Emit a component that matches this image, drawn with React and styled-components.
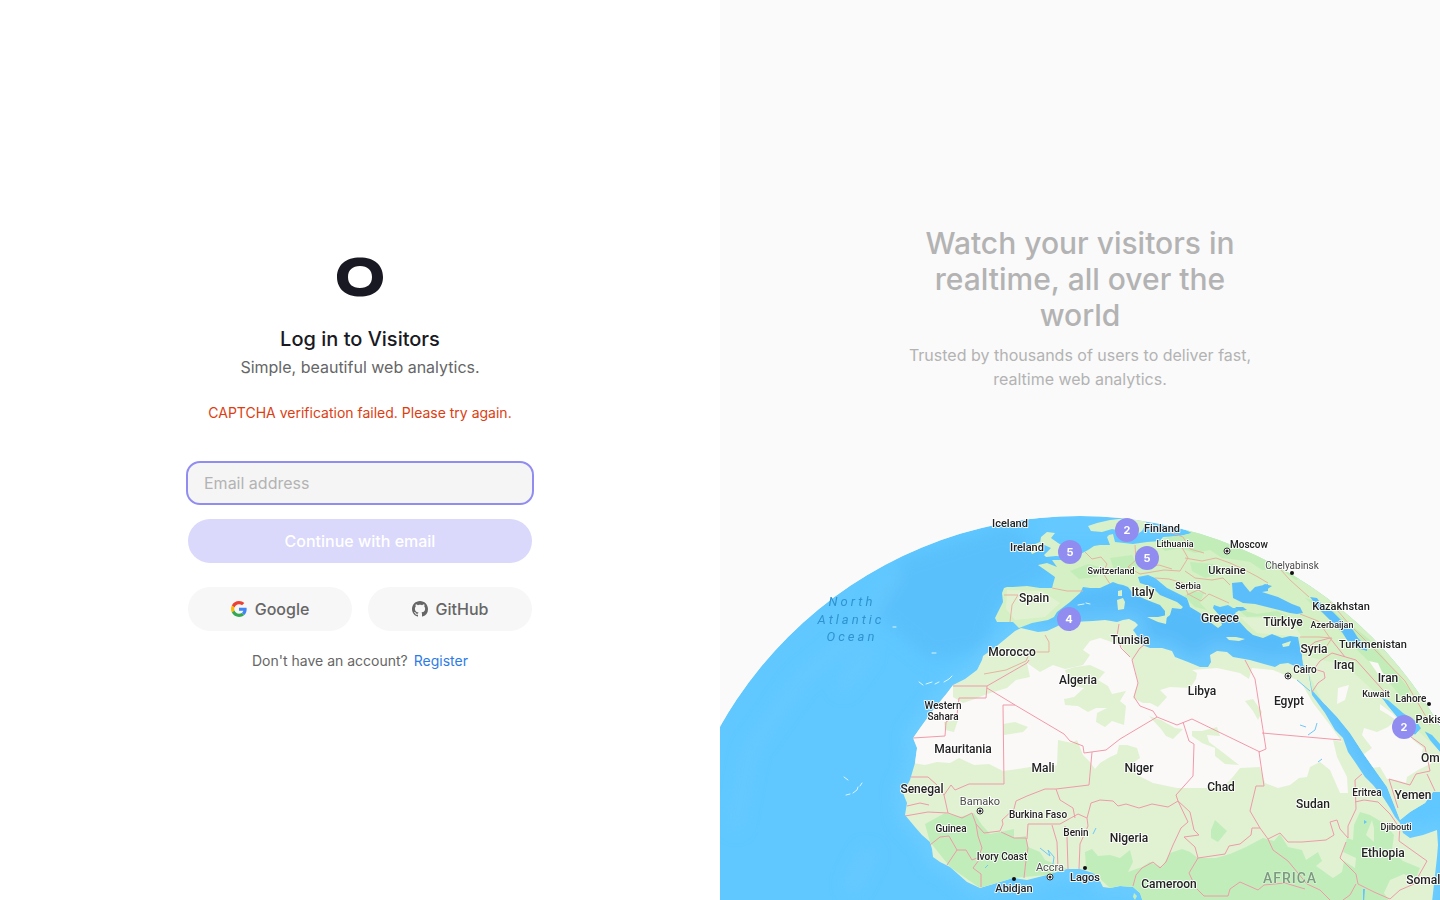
import React, { useState } from 'react'
import styled, { createGlobalStyle } from 'styled-components'

const GlobalStyle = createGlobalStyle`
    * {
        box-sizing: border-box;
    }
    body {
        margin: 0;
        background: #fff;
        font-family: Inter, "Liberation Sans", sans-serif;
        font-size: 16px;
        line-height: 24px;
        color: #666;
    }
`

const Page = styled.main`
    display: grid;
    grid-template-columns: 1fr 1fr;
    min-height: 100vh;
`

const LoginSide = styled.section`
    display: flex;
    align-items: center;
    justify-content: center;
    padding: 0 16px;
`

const LoginBox = styled.div`
    display: flex;
    flex-direction: column;
    align-items: center;
    width: 100%;
    max-width: 344px;
    text-align: center;
`

const Logo = styled.svg`
    width: 100px;
    height: 100px;
`

const Title = styled.h1`
    margin: 0;
    font-size: 20px;
    font-weight: 500;
    line-height: 24px;
    color: #191923;
`

const Subtitle = styled.p`
    margin: 4px 0 0;
`

const ErrorText = styled.p`
    margin: 24px 0 0;
    font-size: 14px;
    line-height: 20px;
    color: #dc3e12;
`

const Form = styled.form`
    display: flex;
    flex-direction: column;
    gap: 16px;
    width: 100%;
    margin-top: 40px;
`

const EmailInput = styled.input`
    width: 100%;
    height: 40px;
    padding: 0 16px;
    border: none;
    border-radius: 12px;
    background: #f5f5f5;
    outline: 2px solid #918df0;
    font: inherit;
    color: #191923;
    &::placeholder {
        color: #b3b3b3;
        opacity: 1;
    }
`

const Button = styled.button`
    display: flex;
    align-items: center;
    justify-content: center;
    gap: 8px;
    flex: 1;
    min-height: 44px;
    border: none;
    border-radius: 22px;
    background: ${props => props.$primary ? '#dad8fb' : '#f7f7f7'};
    color: ${props => props.$primary ? '#fff' : '#666'};
    font: inherit;
    font-weight: 500;
    cursor: pointer;
`

const Providers = styled.div`
    display: flex;
    gap: 16px;
    width: 100%;
    margin-top: 24px;
`

const Footer = styled.p`
    display: flex;
    gap: 6px;
    margin: 18px 0 0;
    font-size: 14px;
`

const RegisterLink = styled.a`
    color: #2e7be6;
    text-decoration: none;
`

const MapSide = styled.section`
    display: flex;
    flex-direction: column;
    align-items: center;
    padding-top: 25vh;
    background: #fafafa;
    color: #b3b3b3;
    text-align: center;
    overflow: hidden;
`

const Pitch = styled.div`
    max-width: 344px;
`

const PitchTitle = styled.h2`
    margin: 0 0 10px;
    font-size: 30px;
    font-weight: 500;
    line-height: 36px;
`

const PitchText = styled.p`
    margin: 0;
`

const Globe = styled.svg`
    display: block;
    width: 100%;
    margin-top: auto;
`

const Borders = styled.path`
    fill: none;
    stroke: ${props => props.$faint ? '#e6b3a0' : '#f09aa8'};
    stroke-width: 1;
    stroke-linejoin: round;
`

const Label = styled.text`
    font-family: Roboto, "Liberation Sans", sans-serif;
    font-size: ${props => props.$size}px;
    font-weight: ${props => props.$city ? 400 : 500};
    fill: ${props => props.$city ? '#4a4a4a' : '#222'};
    stroke: rgba(255, 255, 255, .85);
    stroke-width: 2px;
    stroke-linejoin: round;
    paint-order: stroke;
    text-anchor: middle;
    dominant-baseline: central;
`

const OceanLabel = styled.text`
    font-family: Roboto, "Liberation Sans", sans-serif;
    font-size: 13px;
    font-style: italic;
    letter-spacing: 3px;
    fill: #2f93cf;
    text-anchor: middle;
    dominant-baseline: central;
`

const ContinentLabel = styled.text`
    font-family: Roboto, "Liberation Sans", sans-serif;
    font-size: 14px;
    font-weight: 500;
    letter-spacing: 1px;
    fill: #7c9a7e;
    stroke: rgba(255, 255, 255, .5);
    stroke-width: 1px;
    paint-order: stroke;
    text-anchor: middle;
    dominant-baseline: central;
`

const PinText = styled.text`
    font-size: 11px;
    font-weight: 700;
    fill: #fff;
    text-anchor: middle;
    dominant-baseline: central;
`

const africa = 'M1021 628L1038 632L1047 631L1060 625L1072 622L1093 621L1105 620L1117 622L1123 620L1129 619L1135 622L1138 625L1133 630L1138 637L1137 643L1150 648L1162 648L1172 651L1175 657L1188 662L1200 667L1208 667L1211 662L1210 655L1217 651L1227 652L1233 657L1250 660L1264 664L1275 667L1280 664L1288 663L1297 667L1308 670L1312 695L1325 713L1335 730L1343 738L1348 752L1355 762L1365 777L1373 785L1383 797L1390 808L1395 817L1400 823L1403 833L1410 838L1423 835L1437 830L1438 845L1437 857L1432 902L1143 902L1140 893L1133 887L1120 886L1110 888L1103 887L1098 877L1093 873L1080 869L1067 869L1047 875L1027 880L1013 878L997 883L980 888L967 882L950 867L940 862L933 857L932 849L930 842L922 835L915 827L905 815L907 803L903 793L910 780L915 763L917 748L913 738L920 728L933 710L947 693L953 685L965 679L977 670L982 660L983 656L998 645L1015 631Z'

const eurasia = 'M1019 628L1013 622L1005 622L997 622L995 618L998 612L1003 602L1002 593L1004 588L1007 587L1013 587L1027 586L1040 588L1052 588L1055 577L1048 572L1038 565L1047 563L1057 567L1052 560L1062 560L1070 562L1075 557L1088 550L1094 546L1100 545L1110 545L1107 537L1109 535L1113 534L1115 542L1133 544L1147 542L1160 541L1163 537L1180 536L1192 533L1178 526L1150 522L1150 505L1450 505L1450 752L1440 744L1432 735L1422 730L1417 722L1403 713L1388 700L1382 698L1387 705L1397 717L1410 730L1415 735L1422 727L1430 740L1440 752L1450 760L1450 792L1433 792L1425 803L1410 812L1400 820L1395 807L1387 787L1377 773L1363 753L1350 733L1337 717L1318 697L1312 690L1308 670L1303 665L1302 655L1300 648L1298 637L1290 636L1282 638L1272 634L1263 638L1253 635L1247 630L1238 620L1235 613L1243 608L1233 608L1228 605L1220 607L1214 605L1213 608L1219 615L1222 625L1218 628L1210 622L1200 613L1190 607L1187 598L1177 593L1167 588L1155 578L1148 575L1138 577L1140 583L1152 587L1160 595L1177 602L1183 607L1181 609L1172 608L1170 615L1165 619L1165 611L1160 605L1147 600L1138 596L1132 592L1128 587L1123 585L1118 584L1113 582L1100 588L1090 588L1083 587L1080 593L1070 602L1057 612L1054 617L1048 620L1032 623Z'

const islands = 'M1044 555L1051 548L1040 543L1041 537L1047 532L1055 533L1051 538L1058 543L1066 548L1074 551L1071 557L1056 556L1046 557ZM1028 547L1040 542L1041 550L1032 554ZM1088 526L1097 523L1110 520L1127 518L1147 521L1142 531L1132 538L1125 541L1122 531L1112 529L1102 532L1091 531ZM1118 591L1122 590L1122 596L1118 596ZM1117 600L1123 598L1125 602L1124 609L1118 610ZM1147 617L1158 617L1167 615L1166 624L1158 622ZM1226 637L1236 637L1245 639L1239 641L1229 640ZM1282 644L1291 641L1289 646L1283 647Z'

const seas = 'M1232 583L1242 582L1245 586L1250 592L1255 587L1268 584L1268 591L1262 592L1278 597L1292 604L1300 607L1303 613L1297 614L1290 613L1279 610L1267 607L1255 604L1243 603L1233 598ZM1310 597L1317 598L1322 605L1333 612L1343 622L1353 630L1358 638L1367 647L1367 651L1357 648L1347 640L1342 632L1330 620L1320 610ZM1235 607L1243 607L1247 610L1240 611ZM1257 588L1265 584L1272 586L1266 590Z'

const sahara = 'M953 685L953 697L963 703L975 699L987 694L1007 688L1016 680L1030 677L1027 663L1040 672L1053 665L1065 669L1083 665L1090 655L1083 650L1090 641L1100 638L1120 645L1132 660L1135 670L1138 683L1133 698L1143 703L1150 703L1158 707L1167 697L1160 690L1170 687L1190 688L1196 679L1197 673L1192 670L1217 668L1240 673L1249 679L1252 668L1273 670L1297 680L1302 684L1313 703L1330 725L1342 742L1333 740L1337 757L1347 777L1348 793L1340 793L1330 770L1320 762L1310 767L1307 777L1299 778L1290 785L1278 788L1265 783L1260 767L1240 768L1232 778L1227 783L1207 788L1177 788L1153 783L1137 775L1133 763L1140 758L1137 748L1127 745L1119 745L1117 754L1110 757L1100 763L1095 769L1090 762L1083 755L1077 740L1072 743L1058 740L1057 765L1045 769L1030 767L1018 769L1003 771L989 764L974 765L959 758L950 763L937 762L925 765L913 763L917 748L913 738L920 728L933 710L947 693Z'

const arabia = 'M1338 688L1349 685L1345 700L1337 704ZM1380 704L1392 713L1406 728L1413 740L1423 748L1421 756L1432 763L1418 770L1407 777L1406 783L1396 780L1387 779L1380 767L1371 768L1360 757L1372 748L1362 735L1364 728L1377 732L1388 727L1396 720L1387 714L1380 710ZM1369 661L1378 663L1382 672L1392 682L1388 684L1378 674Z'

const savannaPatches = 'M1003 724L1015 722L1028 727L1023 732L1004 735ZM1065 670L1075 667L1090 665L1105 672L1098 680L1108 686L1112 694L1126 691L1120 701L1126 706L1124 725L1112 721L1105 727L1096 722L1097 713L1107 708L1096 708L1088 712L1078 706L1065 705L1064 699L1074 697L1084 688L1070 685ZM1192 731L1202 731L1217 727L1220 736L1207 735L1209 742L1221 751L1230 758L1239 765L1225 764L1215 756L1215 748L1202 743L1192 736ZM1149 716L1161 720L1175 728L1183 729L1173 739L1166 736L1161 729ZM1245 701L1253 699L1262 712L1258 720L1253 711ZM944 722L958 720L954 732L945 730Z'

const forest = 'M925 824L945 813L960 817L974 813L982 825L990 834L1000 832L1014 829L1014 838L1026 836L1028 847L1040 852L1045 860L1060 866L1067 869L1047 875L1013 878L980 888L950 867L930 842ZM1085 852L1092 849L1098 856L1110 855L1120 858L1130 850L1133 862L1128 872L1142 867L1150 862L1162 867L1170 853L1182 849L1190 852L1198 858L1216 858L1230 854L1246 847L1263 838L1274 841L1280 834L1288 847L1302 850L1306 860L1318 852L1322 861L1316 866L1333 878L1342 872L1344 861L1355 868L1356 858L1343 852L1347 838L1353 840L1354 825L1360 812L1370 815L1385 824L1394 835L1392 850L1403 861L1420 868L1415 880L1404 874L1390 880L1384 893L1390 902L1143 902L1133 887L1110 888L1098 877L1086 868ZM1211 830L1215 820L1227 831L1218 842L1211 838ZM1372 820L1366 835L1374 842L1374 828Z'

const northForest = 'M1155 541L1180 534L1150 521L1200 515L1310 575L1296 580L1280 569L1262 570L1250 562L1238 560L1222 558L1210 550L1195 553L1180 548L1165 551ZM1184 596L1193 591L1204 593L1200 603L1207 610L1195 607ZM1190 562L1213 564L1220 574L1205 578L1192 571ZM1110 558L1132 555L1139 567L1128 573L1114 569ZM1070 571L1088 564L1103 568L1096 577L1079 579ZM1237 609L1257 614L1277 611L1289 617L1266 616L1247 617ZM1305 598L1330 620L1355 648L1380 672L1404 700L1410 690L1370 640L1325 604Z'

const borders = 'M953 686L987 686L1027 663L1029 660M987 686L986 698L959 698L957 715L946 722L945 736L913 738M987 688L1015 705L1003 705L1004 784L969 784L955 790L951 785L944 795L948 813L962 818L972 813L976 824L984 833L1000 831L1003 824L1002 820L1014 809L1016 801L1027 796L1045 789L1056 789L1089 785L1092 752M1015 705L1064 734L1070 741L1083 746L1084 753L1106 750L1120 739L1157 717L1177 725L1192 719L1260 752M944 795L937 785L928 777L911 777M948 813L928 812L905 816M907 806L920 803L929 805M930 845L940 837L949 836L957 850L947 865M957 850L966 850L972 860L982 856L973 868L981 874L981 887M976 824L978 836L982 848L979 855M1001 832L1014 838L1026 838L1028 848L1026 860L1024 878M1027 839L1028 824L1060 824L1078 814L1087 818L1088 826L1080 844L1079 869M1052 825L1057 842L1058 869M1065 826L1067 837L1068 869M1056 789L1060 800L1073 808L1075 818M1087 818L1091 803L1100 800L1113 801L1118 806L1126 804L1139 808L1152 804L1168 807L1178 801L1188 822L1181 828L1173 845L1166 862L1160 868L1153 862L1142 868L1136 875L1133 886M1132 660L1138 683L1134 697L1140 706L1153 711L1157 717M1130 657L1121 648L1117 636L1119 624M1132 660L1140 648L1147 643M1183 722L1189 741L1194 744L1193 776L1176 795L1178 801L1190 812L1194 830L1199 835L1184 837L1195 847L1198 858L1189 873L1196 888L1204 896L1228 896L1230 889L1240 882L1258 890L1264 885L1285 883L1305 889M1198 858L1225 854L1229 846L1240 844L1251 835L1252 828L1260 828L1250 811L1256 786L1264 786L1259 752L1266 749L1255 679L1245 660M1262 733L1341 740M1260 828L1268 839L1273 850L1288 861L1307 884L1320 890L1330 900M1268 839L1280 833L1288 842L1302 842L1326 840L1334 835L1330 822L1337 820L1340 829L1348 838L1348 826L1356 809L1355 780L1362 774M1355 802L1364 800L1378 802L1390 814L1399 827M1346 842L1340 858L1356 874L1358 884L1374 892L1390 899L1400 890L1414 884L1427 861L1399 841L1400 825M1356 884L1350 895L1343 900M1398 808L1393 792L1389 779L1410 785L1416 774L1430 771L1425 747L1411 737M1427 774L1435 791M1312 692L1318 683L1325 678L1324 672L1314 669L1320 661L1332 653L1356 660L1390 698M1302 652L1315 642L1330 638L1345 657'

const euroBorders = 'M1052 588L1067 591L1083 591M1004 595L1018 595L1012 605L1010 622M1085 552L1092 559L1101 557L1107 564L1103 573L1110 584M1135 545L1136 560L1128 567L1140 574L1164 570L1180 571L1188 558L1180 544M1145 567L1159 565L1172 569M1155 578L1169 579L1183 583L1188 594L1201 601L1209 594L1229 603M1187 595L1198 590L1206 594M1185 558L1202 561L1216 558L1230 563L1243 569L1258 577L1268 583M1185 571L1195 578L1212 580L1223 578L1230 585M1164 530L1183 537L1190 549L1204 553M1300 614L1318 621L1330 638M1300 637L1319 637L1332 638L1322 653L1314 646L1303 652M1280 569L1290 580L1309 597M1330 602L1350 625L1375 650L1405 681L1425 715L1430 725M1045 635L1049 642L1049 652L1030 652L1026 661M984 674L1006 670L1026 661'

// [text, x, y, font size, city]
const labels = [
    ['Iceland', 1010, 523, 11],
    ['Ireland', 1027, 547, 11],
    ['Finland', 1162, 528, 11],
    ['Lithuania', 1175, 544, 9],
    ['Switzerland', 1111, 571, 9],
    ['Moscow', 1249, 544, 10],
    ['Ukraine', 1227, 570, 11],
    ['Chelyabinsk', 1292, 565, 10, true],
    ['Spain', 1034, 598, 12],
    ['Italy', 1143, 592, 12],
    ['Serbia', 1188, 586, 9],
    ['Greece', 1220, 618, 12],
    ['Türkiye', 1283, 622, 12],
    ['Kazakhstan', 1341, 606, 11],
    ['Azerbaijan', 1332, 625, 9],
    ['Turkmenistan', 1373, 644, 11],
    ['Syria', 1314, 649, 12],
    ['Iraq', 1344, 665, 12],
    ['Cairo', 1305, 669, 10],
    ['Iran', 1388, 678, 12],
    ['Kuwait', 1376, 694, 9],
    ['Lahore', 1411, 698, 10],
    ['Pakistan', 1437, 719, 11],
    ['Oman', 1437, 758, 12],
    ['Yemen', 1413, 795, 12],
    ['Eritrea', 1367, 792, 10],
    ['Djibouti', 1396, 827, 9],
    ['Ethiopia', 1383, 853, 12],
    ['Somalia', 1428, 880, 12],
    ['Tunisia', 1130, 640, 12],
    ['Morocco', 1012, 652, 12],
    ['Algeria', 1078, 680, 12],
    ['Libya', 1202, 691, 12],
    ['Egypt', 1289, 701, 12],
    ['Western', 943, 705, 10],
    ['Sahara', 943, 716, 10],
    ['Mauritania', 963, 749, 12],
    ['Mali', 1043, 768, 12],
    ['Niger', 1139, 768, 12],
    ['Chad', 1221, 787, 12],
    ['Sudan', 1313, 804, 12],
    ['Senegal', 922, 789, 12],
    ['Bamako', 980, 801, 11, true],
    ['Burkina Faso', 1038, 814, 10],
    ['Guinea', 951, 828, 10],
    ['Benin', 1076, 832, 10],
    ['Nigeria', 1129, 838, 12],
    ['Ivory Coast', 1002, 856, 10],
    ['Accra', 1050, 867, 11, true],
    ['Lagos', 1085, 877, 11],
    ['Abidjan', 1014, 888, 11],
    ['Cameroon', 1169, 884, 12]
]

const capitals = [[1227, 551], [1288, 676], [980, 811], [1050, 877]]
const cities = [[1292, 573], [1429, 704], [1085, 868], [1014, 879]]

const pins = [
    [1127, 530, 2],
    [1070, 552, 5],
    [1147, 558, 5],
    [1069, 619, 4],
    [1404, 727, 2]
]

const WorldMap = () => (
    <Globe viewBox="720 500 720 400" role="img" aria-label="Visitors around the world">
        <defs>
            <clipPath id="globe">
                <circle cx="1080" cy="929" r="413" />
            </clipPath>
            <clipPath id="africa">
                <path d={africa} />
            </clipPath>
            <clipPath id="eurasia">
                <path d={eurasia} />
            </clipPath>
            <filter id="soft" x="-20%" y="-20%" width="140%" height="140%">
                <feGaussianBlur stdDeviation="8" />
            </filter>
        </defs>
        <g clipPath="url(#globe)">
            <circle cx="1080" cy="929" r="413" fill="#60c8ff" />
            <g filter="url(#soft)">
                <path d="M900 560L1010 525L1060 570L1000 600L985 650L930 660L870 610Z" fill="#5ac0fb" />
                <path d="M1030 625L1080 590L1140 580L1220 610L1310 640L1310 675L1200 675L1130 640ZM1305 690L1330 690L1400 810L1380 810Z" fill="#57bbf9" />
                <path d="M735 830L750 750L800 680L860 630L900 570M840 690L870 650" fill="none" stroke="#72ceff" strokeWidth="10" opacity=".5" />
                <path d={africa} fill="none" stroke="#76d1ff" strokeWidth="14" opacity=".6" />
                <path d="M1040 526L1170 526M850 890L870 850" fill="none" stroke="#72ceff" strokeWidth="14" opacity=".5" />
            </g>
            <path d={eurasia} fill="#d4f0c4" />
            <g clipPath="url(#eurasia)">
                <path d={northForest} fill="#c3edb8" />
                <path d="M1007 590L1042 591L1060 603L1045 617L1015 620L1006 609ZM1240 617L1290 619L1302 637L1257 633ZM1300 655L1345 665L1450 760L1450 815L1380 825Z" fill="#e0f2d2" />
                <path d={arabia} fill="#fbf8f8" />
            </g>
            <path d={islands} fill="#d9f1ca" />
            <path d={seas} fill="#5bbefb" />
            <path d={africa} fill="#e0f2d2" />
            <g clipPath="url(#africa)">
                <path d={sahara} fill="#fbf8f8" />
                <path d={savannaPatches} fill="#e0f2d2" />
                <path d={forest} fill="#c1edbb" />
                <path d="M1040 848L1050 856L1048 850L1054 857L1053 864M1093 834L1096 828M985 868L988 865M1300 725L1306 727M1308 735L1315 730L1317 723M1318 762L1322 759M1297 680L1310 691" fill="none" stroke="#6fc7fa" strokeWidth="1" />
                <path d="M1364 820L1367 822L1364 824ZM1363 889L1365 889L1364 902L1363 902Z" fill="#64c5fc" />
            </g>
            <path d="M919 682L923 685M926 684L932 682M935 684L939 682M944 682L949 679L952 676M893 627L896 627M932 653L936 653M844 777L848 780M860 786L862 783M846 795L850 794M853 793L857 790L858 787M1078 605L1084 604M1086 603L1090 604" fill="none" stroke="#dcf3f6" strokeWidth="1" strokeLinecap="round" />
            <path d="M1134 893L1137 896L1135 900L1133 897Z" fill="#c1edbb" />
            <Borders d={borders} />
            <Borders $faint d={euroBorders} />
        </g>
        <OceanLabel x="852" y="601">North</OceanLabel>
        <OceanLabel x="851" y="619">Atlantic</OceanLabel>
        <OceanLabel x="852" y="636">Ocean</OceanLabel>
        <ContinentLabel x="1290" y="878">AFRICA</ContinentLabel>
        {capitals.map(([x, y]) => (
            <g key={x}>
                <circle cx={x} cy={y} r="3" fill="#fff" stroke="#333" />
                <circle cx={x} cy={y} r="1.5" fill="#222" />
            </g>
        ))}
        {cities.map(([x, y]) => <circle key={x} cx={x} cy={y} r="2" fill="#111" />)}
        {labels.map(([name, x, y, size, city]) => (
            <Label key={name} x={x} y={y} $size={size} $city={city}>{name}</Label>
        ))}
        {pins.map(([x, y, count]) => (
            <g key={x}>
                <circle cx={x} cy={y} r="12" fill="#918df0" />
                <PinText x={x} y={y}>{count}</PinText>
            </g>
        ))}
    </Globe>
)

const GoogleIcon = () => (
    <svg width="16" height="16" viewBox="0 0 48 48" aria-hidden="true">
        <path fill="#EA4335" d="M24 9.5c3.54 0 6.71 1.22 9.21 3.6l6.85-6.85C35.9 2.38 30.47 0 24 0 14.62 0 6.51 5.38 2.56 13.22l7.98 6.19C12.43 13.72 17.74 9.5 24 9.5z" />
        <path fill="#4285F4" d="M46.98 24.55c0-1.57-.15-3.09-.38-4.55H24v9.02h12.94c-.58 2.96-2.26 5.48-4.78 7.18l7.73 6c4.51-4.18 7.09-10.36 7.09-17.65z" />
        <path fill="#FBBC05" d="M10.53 28.59c-.48-1.45-.76-2.99-.76-4.59s.27-3.14.76-4.59l-7.98-6.19C.92 16.46 0 20.12 0 24c0 3.88.92 7.54 2.56 10.78l7.97-6.19z" />
        <path fill="#34A853" d="M24 48c6.48 0 11.93-2.13 15.89-5.81l-7.73-6c-2.15 1.45-4.92 2.3-8.16 2.3-6.26 0-11.57-4.22-13.47-9.91l-7.98 6.19C6.51 42.62 14.62 48 24 48z" />
    </svg>
)

const GithubIcon = () => (
    <svg width="16" height="16" viewBox="0 0 16 16" fill="currentColor" aria-hidden="true">
        <path d="M8 0C3.58 0 0 3.58 0 8c0 3.54 2.29 6.53 5.47 7.59.4.07.55-.17.55-.38 0-.19-.01-.82-.01-1.49-2.01.37-2.53-.49-2.69-.94-.09-.23-.48-.94-.82-1.13-.28-.15-.68-.52-.01-.53.63-.01 1.08.58 1.23.82.72 1.21 1.87.87 2.33.66.07-.52.28-.87.51-1.07-1.78-.2-3.64-.89-3.64-3.95 0-.87.31-1.59.82-2.15-.08-.2-.36-1.02.08-2.12 0 0 .67-.21 2.2.82.64-.18 1.32-.27 2-.27s1.36.09 2 .27c1.53-1.04 2.2-.82 2.2-.82.44 1.1.16 1.92.08 2.12.51.56.82 1.27.82 2.15 0 3.07-1.87 3.75-3.65 3.95.29.25.54.73.54 1.48 0 1.07-.01 1.93-.01 2.2 0 .21.15.46.55.38A8.01 8.01 0 0 0 16 8c0-4.42-3.58-8-8-8z" />
    </svg>
)

const App = () => {
    const [email, setEmail] = useState('')

    return (
        <Page>
            <GlobalStyle />
            <LoginSide>
                <LoginBox>
                    <Logo viewBox="0 0 100 100" role="img" aria-label="Visitors">
                        <path
                            fill="#191923"
                            fillRule="evenodd"
                            d="M50 30.5C64 30.5 73 38 73 50S64 69.5 50 69.5S27 62 27 50S36 30.5 50 30.5ZM50 39C42.5 39 38 43 38 50S42.5 61 50 61S62 57 62 50S57.5 39 50 39Z"
                        />
                    </Logo>
                    <Title>Log in to Visitors</Title>
                    <Subtitle>Simple, beautiful web analytics.</Subtitle>
                    <ErrorText role="alert">CAPTCHA verification failed. Please try again.</ErrorText>
                    <Form onSubmit={e => e.preventDefault()}>
                        <EmailInput
                            type="email"
                            aria-label="Email address"
                            placeholder="Email address"
                            value={email}
                            onChange={e => setEmail(e.target.value)}
                        />
                        <Button $primary type="submit">Continue with email</Button>
                    </Form>
                    <Providers>
                        <Button type="button"><GoogleIcon />Google</Button>
                        <Button type="button"><GithubIcon />GitHub</Button>
                    </Providers>
                    <Footer>
                        Don't have an account?
                        <RegisterLink href="#register">Register</RegisterLink>
                    </Footer>
                </LoginBox>
            </LoginSide>
            <MapSide>
                <Pitch>
                    <PitchTitle>Watch your visitors in realtime, all over the world</PitchTitle>
                    <PitchText>Trusted by thousands of users to deliver fast, realtime web analytics.</PitchText>
                </Pitch>
                <WorldMap />
            </MapSide>
        </Page>
    )
}

export default App
